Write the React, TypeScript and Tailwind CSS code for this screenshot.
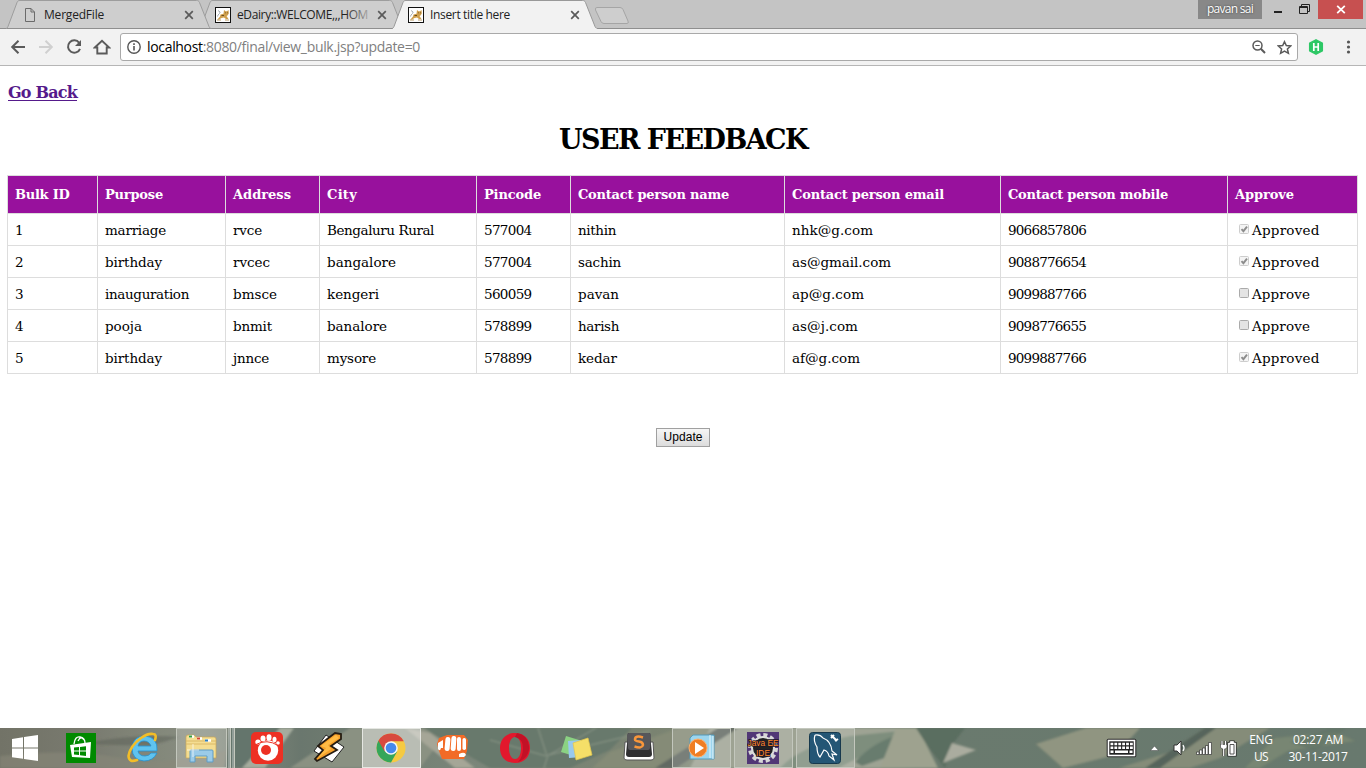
import React, { useLayoutEffect, useRef, useState } from "react";

/** Text set to a fixed advance width by adjusting its letter spacing. */
function Fit({ w, children, className = "" }: { w: number; children: React.ReactNode; className?: string }) {
  const ref = useRef<HTMLSpanElement>(null);
  const [spacing, setSpacing] = useState(0);
  useLayoutEffect(() => {
    const el = ref.current;
    if (!el) return;
    const n = (el.textContent || "").length;
    setSpacing((w - el.getBoundingClientRect().width) / n);
  }, [w]);
  return (
    <span ref={ref} className={"inline-block whitespace-nowrap " + className} style={{ letterSpacing: spacing }}>
      {children}
    </span>
  );
}

function TomcatIcon() {
  return (
    <svg width="16" height="16" viewBox="0 0 16 16">
      <rect x="0.5" y="0.5" width="15" height="15" fill="#fff" stroke="#111" />
      <path d="M9 3L10.500 4.200H12L13.500 3L13.800 6.500L12.500 8.500L11.500 9L13.500 12H11L9 10.500L6.500 11L4 12.500H2.500L5 9.500L5.500 7.500L8.500 6.800Z" fill="#cf9f4c" />
      <path d="M3 3.500Q6.500 5 4.500 6.500T2.500 9.500" stroke="#a8afb5" fill="none" />
      <path d="M10.300 5.800H11M12.300 5.800H13M6.500 8.500H9" stroke="#6b4d20" />
      <path d="M2 13H6M10 13H14" stroke="#a7803d" strokeWidth="0.800" />
    </svg>
  );
}

function Tab({ title, w, active, layer, icon }: { title: string; w: number; active?: boolean; layer: string; icon: React.ReactNode }) {
  return (
    <div className={"relative flex h-[29px] w-[193px] shrink-0 items-center pl-[17px] " + layer}>
      <svg className="absolute top-0 left-px overflow-visible" width="206" height="29" viewBox="0 0 206 29">
        <path
          d="M0 28.5C1 28.5 1.5 27.5 2 26.5L11 2.500C11.600 1 12.500 0.500 14 0.500H190.500C192 0.500 192.900 1 193.500 2.500L203 26.500C203.500 27.500 204 28.500 205.500 28.500"
          fill={active ? "#f2f2f2" : "#cecece"}
          stroke={active ? "#999" : "#9d9d9d"}
        />
        <path d="M1 28.500H204.500" stroke={active ? "#f2f2f2" : "#8f8f8f"} />
      </svg>
      <div className="relative flex h-full w-full items-center pt-[1px]">
        {icon}
        <div className="ml-[6px] w-[132px] overflow-hidden text-[12px] leading-[18px] text-[#222]">
          <Fit w={w}>{title}</Fit>
        </div>
        <svg className="ml-[8px] shrink-0" width="10" height="10" viewBox="0 0 10 10">
          <path d="M1.200 1.200L8.800 8.800M8.800 1.200L1.200 8.800" stroke="#5a5a5a" strokeWidth="1.700" />
        </svg>
        {title.startsWith("eDairy") && <div className="absolute top-1 left-[130px] h-5 w-[24px] bg-linear-to-r from-[#cecece]/0 to-[#cecece]/80" />}
      </div>
    </div>
  );
}

function TabStrip() {
  const page = (
    <svg width="16" height="16" viewBox="0 0 16 16">
      <path d="M3.500 1.500H9L12.500 5V14.500H3.500ZM9 1.500V5H12.500" fill="none" stroke="#6b6b6b" />
    </svg>
  );
  return (
    <div className="flex h-[29px] items-start border-b border-[#8f8f8f] bg-[#c4c4c4] pl-[5px] font-['Open_Sans',sans-serif]">
      <Tab title="MergedFile" w={60} layer="z-[2]" icon={page} />
      <Tab title="eDairy::WELCOME,,,HOM" w={131} layer="z-[1]" icon={<TomcatIcon />} />
      <Tab title="Insert title here" w={80} layer="z-[3]" active icon={<TomcatIcon />} />
      <svg className="mt-[7px] ml-[10px]" width="37" height="18" viewBox="0 0 37 18">
        <path d="M3 0.500H26Q28 0.500 29 2.500L34 14Q35 16.500 33 16.500H10Q8 16.500 7 14.500L1.500 3Q0.800 0.500 3 0.500Z" fill="#cecece" stroke="#a5a5a5" />
      </svg>
      <div className="ml-auto flex items-start">
        <div className="flex h-[19px] w-[64px] items-center justify-center bg-[#888] pb-[1px] text-[12px] text-white [text-shadow:0_0_2px_#333]">
          <Fit w={46}>pavan sai</Fit>
        </div>
        <svg width="56" height="19" viewBox="0 0 56 19" fill="none" stroke="#222">
          <path d="M12 12H20" strokeWidth="2" />
          <path d="M37.500 6.500H45.500V13.500H37.500Z M37 7.500H46" />
          <path d="M39.500 6V4.500H47.500V11.500H46" />
        </svg>
        <div className="mr-[3px] flex h-[19px] w-[45px] items-center justify-center bg-[#c75050]">
          <svg width="10" height="9" viewBox="0 0 10 9">
            <path d="M1.200 0.800L8.800 8.200M8.800 0.800L1.200 8.200" stroke="#fff" strokeWidth="1.800" />
          </svg>
        </div>
      </div>
    </div>
  );
}

function Toolbar() {
  return (
    <div className="flex h-[37px] items-center border-b border-[#b6b6b6] bg-[#f2f2f2] pl-[10px]">
      <svg width="16" height="16" viewBox="0 0 16 16" fill="none" stroke="#5a5a5a" strokeWidth="2">
        <path d="M15 8H2.500M8.500 1.700L2.200 8L8.500 14.300" />
      </svg>
      <svg className="ml-[12px]" width="16" height="16" viewBox="0 0 16 16" fill="none" stroke="#d0d0d0" strokeWidth="2">
        <path d="M1 8H13.500M7.500 1.700L13.800 8L7.500 14.300" />
      </svg>
      <svg className="ml-[12px]" width="16" height="16" viewBox="0 0 16 16" fill="none">
        <path d="M13.200 3.800A6.200 6.200 0 1 0 14 9.800" stroke="#5a5a5a" strokeWidth="2" />
        <path d="M15 1V7H9Z" fill="#5a5a5a" />
      </svg>
      <svg className="ml-[11px]" width="18" height="16" viewBox="0 0 18 16" fill="none">
        <path d="M1.800 8.500L9 1.700L16.200 8.500H13.700V14.500H4.300V8.500Z" stroke="#5a5a5a" strokeWidth="1.900" />
      </svg>
      <div className="ml-[9px] flex h-[28px] w-[1178px] items-center rounded-[3px] border border-[#a9a9a9] bg-white pr-[5px] pl-[6px]">
        <svg width="14" height="14" viewBox="0 0 14 14" fill="none" stroke="#555">
          <circle cx="7" cy="7" r="6.200" strokeWidth="1.400" />
          <path d="M7 6V10.500M7 3.300V4.900" strokeWidth="1.600" />
        </svg>
        <div className="ml-[6px] font-['Open_Sans',sans-serif] text-[14px] leading-[20px] text-[#808080]">
          <Fit w={273}>
            <span className="text-black">localhost</span>:8080/final/view_bulk.jsp?update=0
          </Fit>
        </div>
        <svg className="ml-auto" width="14" height="14" viewBox="0 0 14 14" fill="none" stroke="#5a5a5a">
          <circle cx="5.500" cy="5.500" r="4.500" strokeWidth="1.500" />
          <path d="M8.800 8.800L13 13" strokeWidth="2" />
          <path d="M3.300 5.500H7.700" />
        </svg>
        <svg className="ml-[11px]" width="15" height="15" viewBox="0 0 15 14">
          <path d="M7.500 1.200L9.300 5.100L13.700 5.500L10.400 8.400L11.400 12.800L7.500 10.500L3.600 12.800L4.600 8.400L1.300 5.500L5.700 5.100Z" fill="none" stroke="#5a5a5a" strokeWidth="1.500" />
        </svg>
      </div>
      <svg className="ml-[10px]" width="16" height="16" viewBox="0 0 16 16">
        <path d="M8 0.800L14.300 4.200V11.800L8 15.200L1.700 11.800V4.200Z" fill="#2ec866" stroke="#2ec866" strokeLinejoin="round" strokeWidth="1.500" />
        <path d="M5.800 4V12M10.200 4V12M5.800 8H10.200" stroke="#fff" strokeWidth="1.700" fill="none" />
      </svg>
      <svg className="ml-[22px]" width="5" height="14" viewBox="0 0 5 14" fill="#555">
        <circle cx="2.500" cy="2" r="1.600" />
        <circle cx="2.500" cy="7" r="1.600" />
        <circle cx="2.500" cy="12" r="1.600" />
      </svg>
    </div>
  );
}

type Cell = [string, number];
const headers: Cell[] = [
  ["Bulk ID", 54.5], ["Purpose", 58], ["Address", 58], ["City", 30], ["Pincode", 57],
  ["Contact person name", 151], ["Contact person email", 152], ["Contact person mobile", 160], ["Approve", 59],
];
const rows: Cell[][] = [
  [["1", 8], ["marriage", 61], ["rvce", 29], ["Bengaluru Rural", 107], ["577004", 47.500], ["nithin", 38], ["nhk@g.com", 81], ["9066857806", 78], ["Approved", 67.500]],
  [["2", 8], ["birthday", 57], ["rvcec", 37], ["bangalore", 69], ["577004", 47.500], ["sachin", 43], ["as@gmail.com", 99], ["9088776654", 78], ["Approved", 67.500]],
  [["3", 8], ["inauguration", 84], ["bmsce", 44], ["kengeri", 52], ["560059", 47.500], ["pavan", 41], ["ap@g.com", 72], ["9099887766", 78], ["Approve", 58]],
  [["4", 8], ["pooja", 37], ["bnmit", 39], ["banalore", 60], ["578899", 47.500], ["harish", 41], ["as@j.com", 66], ["9098776655", 78], ["Approve", 58]],
  [["5", 8], ["birthday", 57], ["jnnce", 36], ["mysore", 49], ["578899", 47.500], ["kedar", 39], ["af@g.com", 68], ["9099887766", 78], ["Approved", 67.500]],
];

function CheckBox({ checked }: { checked: boolean }) {
  return (
    <svg className="mr-[2px] mb-[2px] ml-[4px] shrink-0" width="11" height="11" viewBox="0 0 11 11">
      <rect x="0.500" y="0.500" width="9" height="9" rx="1" fill={checked ? "#f4f4f4" : "#e4e4e4"} stroke={checked ? "#cdcdcd" : "#aaa"} />
      {checked && <path d="M2.500 5.200L4.400 7.200L8 2.700" fill="none" stroke="#8c8c8c" strokeWidth="1.900" />}
    </svg>
  );
}

function Page() {
  return (
    <main className="flex h-[662px] flex-col bg-white font-[Rockwell,'DejaVu_Serif',serif] text-black">
      <a href="#" className="mt-[16px] ml-[8px] self-start text-[16px] leading-[22px] font-bold text-[#551a8b]">
        <Fit w={69} className="underline decoration-1 underline-offset-2">Go Back</Fit>
      </a>
      <h1 className="mt-[16px] self-center pt-[1px] text-center text-[27px] leading-[37px] font-bold">
        <Fit w={248}>USER FEEDBACK</Fit>
      </h1>
      <table className="mt-[17px] ml-[7px] w-[1351px] table-fixed border-separate border-spacing-0 border-t border-l border-[#ddd]">
        <colgroup>
          <col className="w-[90px]" />
          <col className="w-[128px]" />
          <col className="w-[94px]" />
          <col className="w-[157px]" />
          <col className="w-[94px]" />
          <col className="w-[214px]" />
          <col className="w-[216px]" />
          <col className="w-[227px]" />
          <col className="w-[130px]" />
        </colgroup>
        <thead>
          <tr>
            {headers.map(([t, w]) => (
              <th key={t} className="h-[38px] border-r border-b border-[#ddd] bg-[#98119d] p-0 pl-[7px] text-left text-[13px] leading-[20px] font-bold text-white">
                <Fit w={w}>{t}</Fit>
              </th>
            ))}
          </tr>
        </thead>
        <tbody>
          {rows.map((row, r) => (
            <tr key={r}>
              {row.map(([t, w], c) => (
                <td key={c} className="h-[32px] border-r border-b border-[#ddd] p-0 pt-[1px] pl-[7px] text-[13.500px] leading-[20px]">
                  <div className="flex items-center">
                    {c === 8 && <CheckBox checked={t === "Approved"} />}
                    <Fit w={w}>{t}</Fit>
                  </div>
                </td>
              ))}
            </tr>
          ))}
        </tbody>
      </table>
      <button className="mt-[54px] flex h-[19px] w-[54px] items-center justify-center self-center border border-[#a0a0a0] bg-linear-to-b from-[#f6f6f6] to-[#dcdcdc] pb-[2px] font-['Liberation_Sans',sans-serif] text-[12px] leading-none">
        <Fit w={39}>Update</Fit>
      </button>
    </main>
  );
}

function Wallpaper() {
  return (
    <svg className="absolute inset-0" width="1366" height="40" viewBox="0 0 1366 40" preserveAspectRatio="none">
      <defs>
        <linearGradient id="wall">
          <stop offset="0" stopColor="#6f6e62" />
          <stop offset="0.060" stopColor="#77766b" />
          <stop offset="0.150" stopColor="#8a8f82" />
          <stop offset="0.220" stopColor="#66736a" />
          <stop offset="0.350" stopColor="#7a8478" />
          <stop offset="0.480" stopColor="#79816e" />
          <stop offset="0.600" stopColor="#8e9486" />
          <stop offset="0.680" stopColor="#66766a" />
          <stop offset="1" stopColor="#64756a" />
        </linearGradient>
        <filter id="soft"><feGaussianBlur stdDeviation="1.200" /></filter>
      </defs>
      <rect width="1366" height="40" fill="url(#wall)" />
      <g filter="url(#soft)">
        <path d="M0 28Q70 20 120 30T240 18V40H0Z" fill="#898577" opacity="0.600" />
        <path d="M80 16Q135 5 180 9L150 18Z" fill="#4f534c" opacity="0.450" />
        <path d="M230 0H290L272 25L250 40H225Z" fill="#5f7067" />
        <path d="M280 0H294L265 40H242Z" fill="#abb0a2" />
        <path d="M290 40L350 0H450L420 40Z" fill="#8b9182" />
        <path d="M405 0L455 40H475L430 5Z" fill="#aaa99a" />
        <path d="M424 0H632L610 22L570 40H490L452 18Z" fill="#637468" />
        <path d="M544 40L548 27L650 3M546 28L490 12M547 28L538 0M549 27L596 0" stroke="#8c9888" fill="none" />
        <path d="M610 24L680 0H722L668 40H592Z" fill="#858a75" />
        <path d="M710 0H930L890 40H690Z" fill="#a2a696" />
        <path d="M655 40L718 0H738L676 40Z" fill="#5c625d" />
        <path d="M780 40Q800 18 850 8L930 0L862 28L838 40Z" fill="#7d8d7c" />
        <path d="M855 34Q875 12 905 5L890 28L862 38Z" fill="#63786a" />
        <path d="M896 0H918L938 40H880Z" fill="#a2a591" />
        <path d="M916 0H965L951 18L945 40L929 20Z" fill="#53675a" />
        <path d="M943 35L952 15L976 22Z" fill="#b0b0a3" />
        <path d="M1036 16L1086 0H1140L1115 27L1063 40Z" fill="#929580" />
        <path d="M1119 40L1180 21L1215 0H1270L1220 30L1190 40Z" fill="#858b77" />
        <path d="M1145 40L1205 0H1216L1160 40Z" fill="#505d55" />
        <path d="M1245 40L1275 10L1335 4L1355 13L1288 23L1260 40Z" fill="#76846f" />
        <path d="M1290 14L1330 0H1347L1315 23Z" fill="#5b7062" opacity="0.700" />
      </g>
      <rect width="1366" height="40" fill="#8a9286" opacity="0.140" />
    </svg>
  );
}

const I = (props: { children: React.ReactNode }) => (
  <svg width="32" height="32" viewBox="0 0 32 32">{props.children}</svg>
);

const taskIcons: React.ReactNode[] = [
  <I>
    <rect x="1" y="1" width="30" height="30" fill="#008a00" />
    <path d="M5 13L26 10L25 26L7 25Z" fill="#fff" />
    <path d="M9 12Q10 4 15 5T20 11M13 9Q16 3 19 8" fill="none" stroke="#fff" strokeWidth="1.300" />
    <path d="M9 15.500L14 15V18.500H9ZM15 15L21 14.200V18.500H15ZM9 19.500H14V23L9 22.500ZM15 19.500H21V24L15 23.200Z" fill="#008a00" />
  </I>,
  <I>
    <path fillRule="evenodd" d="M30 19H11Q12 24 18 24Q22 24 24 21H30Q26 29 17 29Q5 28 5 16Q6 4 18 4Q31 5 30 19ZM11 14H24Q22 9 17 9Q12 9 11 14Z" fill="#5fc3ef" stroke="#2490cf" strokeWidth="0.800" />
    <path d="M28 8Q30 2 26 2Q21 1 14 6Q3 14 1.500 24Q2 31 10 28" fill="none" stroke="#f3bd27" strokeWidth="2.600" strokeLinecap="round" />
  </I>,
  <I>
    <path d="M1 5Q1 3 3 3H9L11 5H29Q31 5 31 7V26H1Z" fill="#f4dd91" stroke="#c8a657" strokeWidth="0.700" />
    <path d="M1 9H31M1 12H31" stroke="#dcb967" />
    <path d="M4 4.500H9M12 6.500H17M20 8.500H26" stroke="#fff" strokeWidth="2.500" />
    <path d="M4 4.500H7" stroke="#2e9d43" strokeWidth="2" /><path d="M12 6.500H15" stroke="#d6442e" strokeWidth="2" /><path d="M20 8.500H23" stroke="#2c7fc1" strokeWidth="2" />
    <path d="M5 30V19Q5 18 6 18H27Q28 18 28 19V30H22V24H10V30Z" fill="#9bcbe8" stroke="#5e9bc4" />
    <path d="M8 12V25M2 18H14" stroke="#fff" strokeWidth="0.700" />
  </I>,
  <I>
    <rect x="0" y="0" width="32" height="32" rx="5" fill="#ed3023" />
    <g fill="#fff">
      <circle cx="17" cy="18.500" r="10.200" />
      <ellipse cx="7" cy="10" rx="2.700" ry="2.500" /><ellipse cx="12" cy="6.500" rx="2.500" ry="3" /><ellipse cx="18" cy="5.500" rx="2.500" ry="3.200" /><ellipse cx="23.500" cy="7.500" rx="2" ry="2.800" /><circle cx="27" cy="11" r="1.800" />
    </g>
    <circle cx="15" cy="18" r="5" fill="#ed3023" />
    <path d="M5 12.500Q16 6.500 27 13.500" stroke="#ed3023" fill="none" />
  </I>,
  <I>
    <path d="M13 3L31 15L19 30L1 19Z" fill="#fff" stroke="#222" />
    <path d="M22 1L5 14L10 18L2 27L4 29L24 18L18 14L28 7V2Z" fill="#f6a12b" stroke="#241c13" strokeWidth="1.800" />
    <path d="M23 3L8 14L13 16L5 26L18 17L15 13L26 6Z" fill="#ffbc45" />
  </I>,
  <I>
    <circle cx="16" cy="16" r="14.500" fill="#f5ca42" />
    <path d="M16 16L3.400 8.800A14.500 14.500 0 0 0 16 30.500L22.200 19.500Z" fill="#35a65a" />
    <path d="M3.400 8.800A14.500 14.500 0 0 1 28.800 9.200H16L9.600 19.500Z" fill="#d84a3f" />
    <circle cx="16" cy="16" r="6.800" fill="#f6f6f4" /><circle cx="16" cy="16" r="5.300" fill="#4589ec" />
  </I>,
  <I>
    <path d="M0 12L2 6L10 3H27L31 8L30 19L27 27H5L2 19Z" fill="#f26b27" />
    <g fill="#fff">
      <rect x="8" y="5" width="5" height="14" rx="2.300" transform="rotate(5 10 12)" /><rect x="14" y="4" width="5" height="15" rx="2.300" transform="rotate(4 16 12)" /><rect x="20" y="5" width="4" height="14" rx="2" /><rect x="25.500" y="6" width="3.500" height="12" rx="1.700" />
      <path d="M1 11L6 8V16H4Q3 20 1 17ZM22 22Q28 19 29 23L27 25H22Z" />
    </g>
  </I>,
  <I>
    <path fillRule="evenodd" d="M16 1C6 1 1 8 1 16S6 31 16 31S31 24 31 16S26 1 16 1ZM16 5C20 5 22 10 22 16S20 27 16 27S10 22 10 16S12 5 16 5Z" fill="#e2182d" />
    <path d="M18 1Q29 3 30 14T19 30Q24 25 24 16T16 5Z" fill="#b50e24" opacity="0.700" />
  </I>,
  <I>
    <path d="M5 4L18 8L13 24L0 20Z" fill="#8bd283" />
    <path d="M7 9L20 8L21 25L8 26Z" fill="#98c9ee" />
    <path d="M12 11L27 6L31 23L15 28Z" fill="#f5df68" stroke="#e3c64d" strokeWidth="0.700" />
  </I>,
  <I>
    <path d="M2 10L1 26Q1 28 4 28H28Q31 28 31 26L30 10Z" fill="#fff" stroke="#555" />
    <path d="M5 1H27L29 22Q29 25 26 25H6Q3 25 3 22Z" fill="#2f2f31" />
    <path d="M6 1H26Q28 1 28 4L27 16Q27 18 25 18H7Q5 18 5 16L4 4Q4 1 6 1Z" fill="#57575a" />
    <path d="M20 5.500Q12 3 12 7.500Q12 9 16 9.500Q20 10 20 13Q19 17 11.500 14.500" fill="none" stroke="#f8963b" strokeWidth="2.500" />
  </I>,
  <I>
    <path d="M8 3H29V27H5V6Z" fill="#9cd5ee" stroke="#559ab9" />
    <path d="M25 3V26M28 4V27" stroke="#e6f6fc" />
    <circle cx="13" cy="16" r="9" fill="#ef7e24" stroke="#ffb06c" />
    <path d="M10 10L19 16L10 22Z" fill="#fff" />
  </I>,
  <I>
    <rect width="32" height="32" fill="#513776" />
    <circle cx="16" cy="16" r="13" fill="none" stroke="#d7d7d7" strokeWidth="4" strokeDasharray="4 2.800" />
    <circle cx="16" cy="16" r="11" fill="#222" stroke="#ddd" strokeWidth="2" />
    <g fontFamily="Liberation Sans" fontSize="8.500" fill="#ff8b2a" stroke="#201527" strokeWidth="1.500" paintOrder="stroke" textAnchor="middle">
      <text x="16" y="14" textLength="31" lengthAdjust="spacingAndGlyphs">Java EE</text>
      <text x="16" y="24" textLength="14" lengthAdjust="spacingAndGlyphs">IDE</text>
    </g>
  </I>,
  <I>
    <rect x="0.500" y="0.500" width="31" height="31" rx="3" fill="#245675" stroke="#17394d" />
    <path d="M6 3Q11 2 14 6Q22 9 23 19L28 23L23 22L25 28L20 24Q19 19 15 18L11 25Q8 22 8 15Q4 9 6 3" fill="none" stroke="#fff" strokeWidth="1.200" />
    <path d="M22 3L28 9M22 6L25 3M26 9L29 7" stroke="#fff" strokeWidth="2" />
  </I>,
];

function Taskbar() {
  const frame = "border-[#c3c7bd] bg-white/15";
  return (
    <footer className="relative h-[40px] overflow-hidden">
      <Wallpaper />
      <div className="relative flex h-full items-center">
        <div className="flex w-[50px] justify-center">
          <svg width="28" height="26" viewBox="0 0 28 26" fill="#fff">
            <path d="M1 4L12 2.300V12.500H1ZM13 2.100L27 0V12.500H13ZM1 13.500H12V23.800L1 22.200ZM13 13.500H27V26L13 24Z" />
          </svg>
        </div>
        {taskIcons.map((icon, i) => (
          <div key={i} className="flex w-[62px] shrink-0 items-center justify-center">
            {i === 2 ? (
              <div className="flex h-[40px] w-[59px] gap-px">
                <div className="flex h-full w-[51px] items-center justify-center border border-[#c3c7bd] bg-white/20">{icon}</div>
                <div className="h-full w-[3px] border-r border-[#c3c7bd] bg-white/30" />
                <div className="h-full w-[3px] border-r border-[#c3c7bd] bg-white/30" />
              </div>
            ) : (
              <div className={"flex h-[40px] w-[59px] items-center justify-center border " + (i === 5 ? "border-[#e5e7e2] bg-white/40" : i >= 10 ? frame : "border-transparent")}>
                {icon}
              </div>
            )}
          </div>
        ))}
        <div className="ml-auto flex items-center pr-[18px]">
          <svg width="31" height="20" viewBox="0 0 31 20">
            <rect x="0.700" y="0.700" width="29.600" height="18.600" rx="1.500" fill="#222" />
            <rect x="2.500" y="2.500" width="26" height="15" fill="#222" stroke="#fff" strokeWidth="1.600" />
            <path d="M4.500 6H27M4.500 9.700H27" stroke="#fff" strokeWidth="2.600" strokeDasharray="2.800 1.100" />
            <path d="M4.500 13.800H7.500M9 13.800H22M23.500 13.800H26.500" stroke="#fff" strokeWidth="2.600" />
          </svg>
          <svg className="ml-[13px]" width="9" height="6" viewBox="0 0 9 6"><path d="M0.500 5.500L4.500 1L8.500 5.500Z" fill="#fff" stroke="#444" strokeWidth="0.500" /></svg>
          <svg className="ml-[14px]" width="15" height="16" viewBox="0 0 15 16">
            <path d="M1 5H4L8 1V15L4 11H1Z" fill="#fff" stroke="#333" />
            <path d="M10 5Q12 8 10 11" stroke="#fff" strokeWidth="1.300" fill="none" />
          </svg>
          <svg className="ml-[8px]" width="17" height="13" viewBox="0 0 17 13" fill="#fff" stroke="#333" strokeWidth="0.700">
            <path d="M0.500 10H3V12.500H0.500ZM3.500 8H6V12.500H3.500ZM6.500 6H9V12.500H6.500ZM9.500 3.500H12V12.500H9.500ZM12.500 0.500H15.500V12.500H12.500Z" />
          </svg>
          <svg className="ml-[7px]" width="17" height="17" viewBox="0 0 17 17">
            <path d="M2 1V5M5.500 1V5M3.700 8V16" stroke="#333" strokeWidth="2.400" />
            <path d="M0.500 4.500H7V7.500Q4 11 0.500 7.500Z" fill="#fff" stroke="#333" strokeWidth="0.600" />
            <path d="M2 1V5M5.500 1V5M3.700 8V16" stroke="#fff" strokeWidth="1.200" />
            <path d="M8.500 3H10.500V1.500H13.500V3H15.500V15.500H8.500Z" fill="none" stroke="#222" strokeWidth="2.200" />
            <path d="M8.500 3H10.500V1.500H13.500V3H15.500V15.500H8.500Z" fill="#fff" stroke="#fff" strokeWidth="0.800" />
            <path d="M10 4.500H14V14H10Z" fill="none" stroke="#444" strokeWidth="0.900" />
          </svg>
          <div className="ml-[11px] flex w-[26px] flex-col items-center font-['Open_Sans',sans-serif] text-[12px] leading-[17px] text-white">
            <Fit w={23.500}>ENG</Fit>
            <Fit w={14}>US</Fit>
          </div>
          <div className="ml-[14px] flex w-[60px] flex-col items-center font-['Open_Sans',sans-serif] text-[12px] leading-[17px] text-white">
            <Fit w={50}>02:27 AM</Fit>
            <Fit w={59}>30-11-2017</Fit>
          </div>
        </div>
      </div>
    </footer>
  );
}

export default function App() {
  return (
    <div className="flex h-[768px] w-[1366px] flex-col overflow-hidden">
      <TabStrip />
      <Toolbar />
      <Page />
      <Taskbar />
    </div>
  );
}
